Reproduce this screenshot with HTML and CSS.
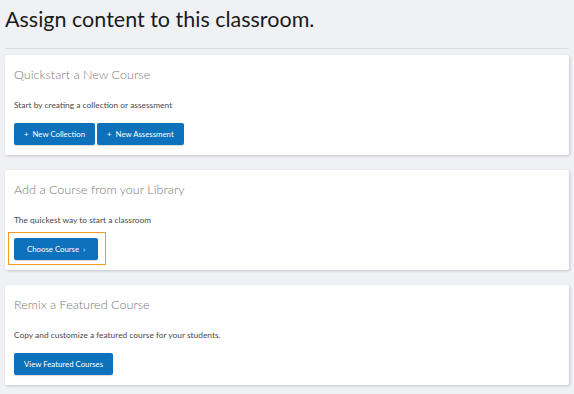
FILE: index.html
```html
<!DOCTYPE html>
<html lang="en">
<head>
    <meta charset="UTF-8">
    <meta name="viewport" content="width=device-width, initial-scale=1.0">
    <title>Assign Content</title>
    <link rel="stylesheet" href="styles.css">
</head>
<body>
    <div class="page">
        <h1 class="page-title">Assign content to this classroom.</h1>

        <div class="card">
            <h2 class="card-title">Quickstart a New Course</h2>
            <p class="card-text">Start by creating a collection or assessment</p>
            <div class="card-actions">
                <button class="btn">+&nbsp; New Collection</button>
                <button class="btn">+&nbsp; New Assessment</button>
            </div>
        </div>

        <div class="card">
            <h2 class="card-title">Add a Course from your Library</h2>
            <p class="card-text">The quickest way to start a classroom</p>
            <div class="card-actions">
                <span class="focus-ring">
                    <button class="btn btn-wide">Choose Course &nbsp;&rsaquo;</button>
                </span>
            </div>
        </div>

        <div class="card">
            <h2 class="card-title">Remix a Featured Course</h2>
            <p class="card-text">Copy and customize a featured course for your students.</p>
            <div class="card-actions">
                <button class="btn">View Featured Courses</button>
            </div>
        </div>
    </div>
</body>
</html>
```

FILE: styles.css
```css
* {
    box-sizing: border-box;
    margin: 0;
    padding: 0;
}

body {
    font-family: Lato, "Open Sans", sans-serif;
    background-color: #f0f1f5;
}

.page {
    padding: 0 5px;
}

.page-title {
    font-size: 21.5px;
    font-weight: 400;
    color: #1a1a1a;
    line-height: 26px;
    padding-top: 6px;
    padding-bottom: 16px;
    border-bottom: 1px solid #dcdde2;
    margin-bottom: 6px;
}

.card {
    background: white;
    height: 100px;
    padding: 12px 9px 0;
    margin-bottom: 15px;
    box-shadow: 1px 1px 3px rgba(0, 0, 0, 0.18);
    border-radius: 2px;
}

.card-title {
    font-size: 12.6px;
    font-weight: 300;
    color: #7a7a7a;
    line-height: 16px;
}

.card-text {
    font-size: 8.4px;
    color: #4a4a4a;
    margin-top: 16px;
    line-height: 12px;
}

.card-actions {
    display: flex;
    gap: 2px;
    margin-top: 12px;
}

.btn {
    font-family: Lato, "Open Sans", sans-serif;
    font-size: 7.8px;
    color: white;
    background-color: #0d72bb;
    border: none;
    border-radius: 2px;
    height: 22px;
    padding: 0 10px;
    box-shadow: 0 1px 1px rgba(0, 0, 0, 0.15);
}

.btn-wide {
    padding: 0 13px;
}

.focus-ring {
    display: inline-flex;
    margin: -6px 0 0 -6px;
    padding: 5px 7px 4px 5px;
    border: 1px solid #f39c1f;
}
```
